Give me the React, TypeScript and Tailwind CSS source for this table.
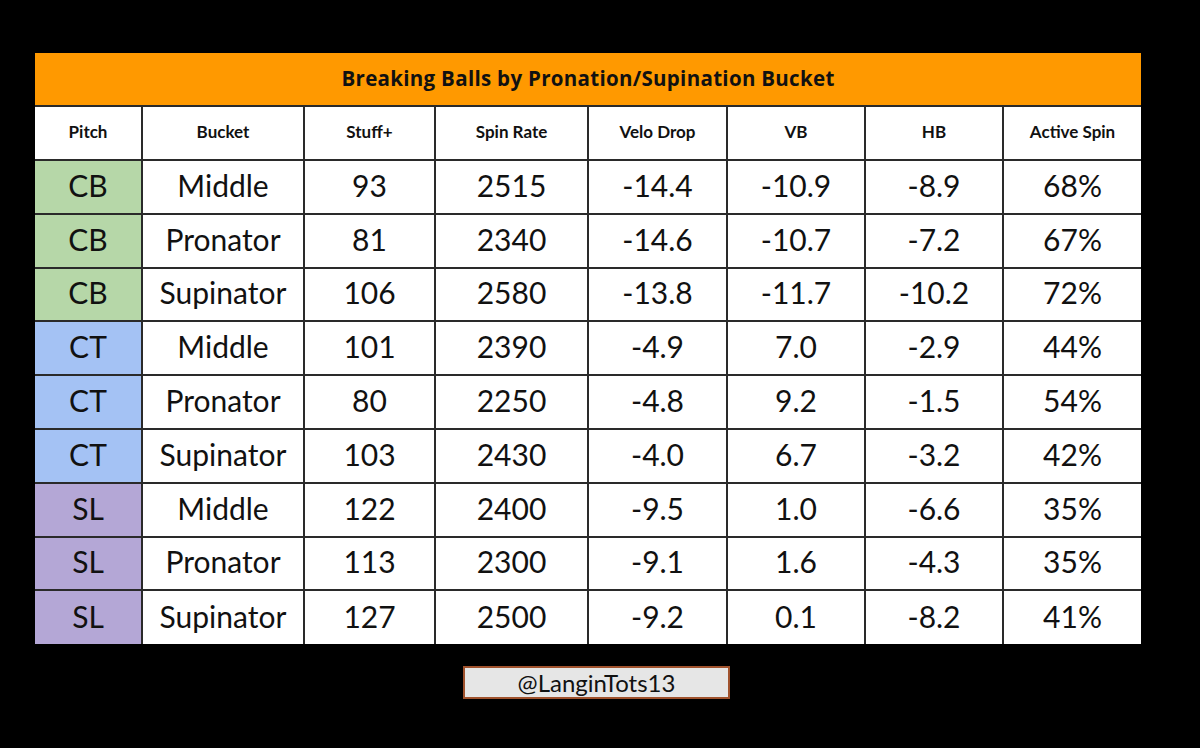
const rows = [
  { pitch: 'CB', bucket: 'Middle', stuff: '93', spin: '2515', velo: '-14.4', vb: '-10.9', hb: '-8.9', active: '68%' },
  { pitch: 'CB', bucket: 'Pronator', stuff: '81', spin: '2340', velo: '-14.6', vb: '-10.7', hb: '-7.2', active: '67%' },
  { pitch: 'CB', bucket: 'Supinator', stuff: '106', spin: '2580', velo: '-13.8', vb: '-11.7', hb: '-10.2', active: '72%' },
  { pitch: 'CT', bucket: 'Middle', stuff: '101', spin: '2390', velo: '-4.9', vb: '7.0', hb: '-2.9', active: '44%' },
  { pitch: 'CT', bucket: 'Pronator', stuff: '80', spin: '2250', velo: '-4.8', vb: '9.2', hb: '-1.5', active: '54%' },
  { pitch: 'CT', bucket: 'Supinator', stuff: '103', spin: '2430', velo: '-4.0', vb: '6.7', hb: '-3.2', active: '42%' },
  { pitch: 'SL', bucket: 'Middle', stuff: '122', spin: '2400', velo: '-9.5', vb: '1.0', hb: '-6.6', active: '35%' },
  { pitch: 'SL', bucket: 'Pronator', stuff: '113', spin: '2300', velo: '-9.1', vb: '1.6', hb: '-4.3', active: '35%' },
  { pitch: 'SL', bucket: 'Supinator', stuff: '127', spin: '2500', velo: '-9.2', vb: '0.1', hb: '-8.2', active: '41%' },
];

const pitchBg: Record<string, string> = {
  CB: 'bg-[#b6d7a8]',
  CT: 'bg-[#a4c2f4]',
  SL: 'bg-[#b4a7d6]',
};

const headers = ['Pitch', 'Bucket', 'Stuff+', 'Spin Rate', 'Velo Drop', 'VB', 'HB', 'Active Spin'];
const widths = [107, 162, 131, 153, 139, 138, 138, 138];

export default function App() {
  return (
    <div className="h-[748px] w-[1200px] bg-black pt-[53px] pl-[35px] font-['Lato',sans-serif] text-[#111]">
      <table className="w-[1106px] table-fixed border-collapse">
        <colgroup>
          {widths.map((w, i) => (
            <col key={i} style={{ width: w }} />
          ))}
        </colgroup>
        <thead>
          {/* Title */}
          <tr className="h-[53px] bg-[#ff9900]">
            <th
              colSpan={8}
              className="border-b-2 border-[#2a2a2a] pb-[2px] text-center font-['Open_Sans',sans-serif] text-[20.5px] font-bold tracking-[0.3px] text-[#111]"
            >
              Breaking Balls by Pronation/Supination Bucket
            </th>
          </tr>
          <tr className="h-[54px] bg-white">
            {headers.map(h => (
              <th key={h} className="border-2 border-[#2a2a2a] border-t-0 pb-[2px] first:border-l-0 last:border-r-0 text-center text-[17px] font-bold">
                {h}
              </th>
            ))}
          </tr>
        </thead>
        <tbody>
          {rows.map((r, i) => (
            <tr key={i} className="h-[53.8px] bg-white text-[30px]">
              <td className={`border-2 border-[#2a2a2a] border-l-0 pb-[3px] text-center ${pitchBg[r.pitch]} ${i === rows.length - 1 ? 'border-b-0' : ''}`}>{r.pitch}</td>
              {[r.bucket, r.stuff, r.spin, r.velo, r.vb, r.hb, r.active].map((v, j) => (
                <td key={j} className={`border-2 border-[#2a2a2a] pb-[3px] text-center last:border-r-0 ${i === rows.length - 1 ? 'border-b-0' : ''}`}>
                  {v}
                </td>
              ))}
            </tr>
          ))}
        </tbody>
      </table>

      {/* Credit */}
      <div className="ml-[428px] mt-[22px] flex h-[33px] w-[267px] items-center justify-center border-2 border-[#a0522d] bg-[#e6e6e6] text-[24px] text-[#111]">
        @LanginTots13
      </div>
    </div>
  );
}
